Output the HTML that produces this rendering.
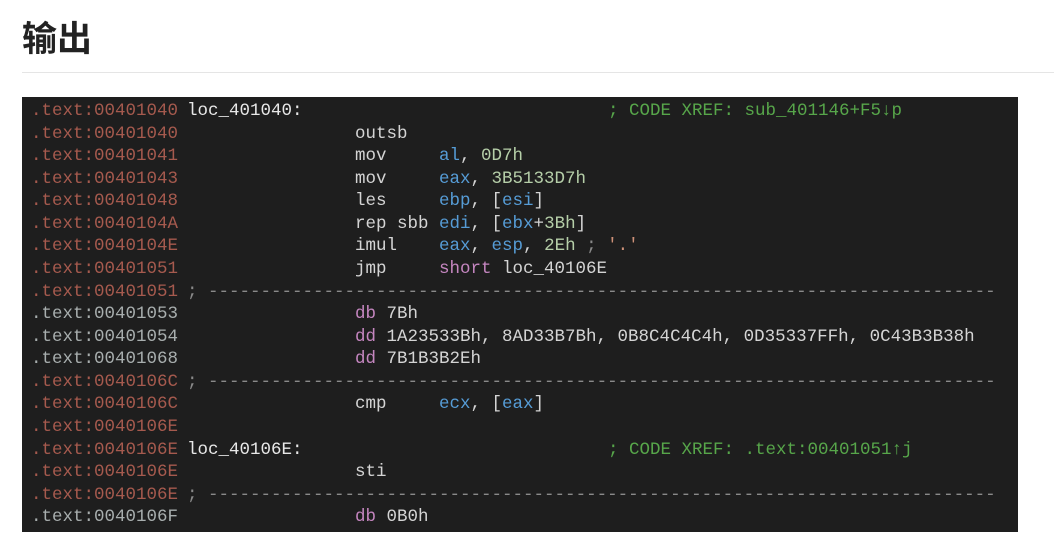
<!DOCTYPE html>
<html><head><meta charset="utf-8"><style>
body{margin:0;background:#fff;width:1054px;height:553px;overflow:hidden;position:relative;font-family:"Liberation Sans","Noto Sans CJK SC",sans-serif}
h1{position:absolute;left:22px;top:17px;margin:0;font-size:35px;font-weight:bold;color:#222;line-height:46px}
.hr{position:absolute;left:22px;top:72px;width:1032px;height:1px;background:#e5e5e5}
.code{position:absolute;left:22px;top:97px;width:996px;height:435px;background:#1e1e1e;font-family:"Liberation Mono",monospace;font-size:17.5px;color:#d4d4d4;overflow:hidden}
.l{position:absolute;left:0;height:22.56px;line-height:22.56px;white-space:pre;width:996px}
.l span{position:absolute}
.a{left:9px;color:#a65a4e}.g{color:#a8aeae}
.lb{left:165px;color:#e8e8e8}
.m{left:333px}.o{left:417px}.c{left:586px;color:#57a64a}
.d{left:165px;color:#8a8a8a}
.r{color:#569cd6}.n{color:#b5cea8}.p{color:#c586c0}.s{color:#ce9178}.x{color:#8a8a8a}
b,i{font-weight:normal;font-style:normal}
</style></head><body>
<h1>输出</h1><div class="hr"></div>
<div class="code">
<div class="l" style="top:3px"><span class="a">.text:00401040</span><span class="lb">loc_401040:</span><span class="c">; CODE XREF: sub_401146+F5↓p</span></div>
<div class="l" style="top:25.5px"><span class="a">.text:00401040</span><span class="m">outsb</span></div>
<div class="l" style="top:48.1px"><span class="a">.text:00401041</span><span class="m">mov</span><span class="o"><b class="r">al</b>, <i class="n">0D7h</i></span></div>
<div class="l" style="top:70.7px"><span class="a">.text:00401043</span><span class="m">mov</span><span class="o"><b class="r">eax</b>, <i class="n">3B5133D7h</i></span></div>
<div class="l" style="top:93.2px"><span class="a">.text:00401048</span><span class="m">les</span><span class="o"><b class="r">ebp</b>, [<b class="r">esi</b>]</span></div>
<div class="l" style="top:115.8px"><span class="a">.text:0040104A</span><span class="m">rep sbb</span><span class="o"><b class="r">edi</b>, [<b class="r">ebx</b>+<i class="n">3Bh</i>]</span></div>
<div class="l" style="top:138.4px"><span class="a">.text:0040104E</span><span class="m">imul</span><span class="o"><b class="r">eax</b>, <b class="r">esp</b>, <i class="n">2Eh</i> <i class="x">;</i> <i class="s">'.'</i></span></div>
<div class="l" style="top:160.9px"><span class="a">.text:00401051</span><span class="m">jmp</span><span class="o"><b class="p">short</b> loc_40106E</span></div>
<div class="l" style="top:183.5px"><span class="a">.text:00401051</span><span class="d">; ---------------------------------------------------------------------------</span></div>
<div class="l" style="top:206.1px"><span class="a g">.text:00401053</span><span class="m"><b class="p">db</b> 7Bh</span></div>
<div class="l" style="top:228.6px"><span class="a g">.text:00401054</span><span class="m"><b class="p">dd</b> 1A23533Bh, 8AD33B7Bh, 0B8C4C4C4h, 0D35337FFh, 0C43B3B38h</span></div>
<div class="l" style="top:251.2px"><span class="a g">.text:00401068</span><span class="m"><b class="p">dd</b> 7B1B3B2Eh</span></div>
<div class="l" style="top:273.8px"><span class="a">.text:0040106C</span><span class="d">; ---------------------------------------------------------------------------</span></div>
<div class="l" style="top:296.3px"><span class="a">.text:0040106C</span><span class="m">cmp</span><span class="o"><b class="r">ecx</b>, [<b class="r">eax</b>]</span></div>
<div class="l" style="top:318.9px"><span class="a">.text:0040106E</span></div>
<div class="l" style="top:341.5px"><span class="a">.text:0040106E</span><span class="lb">loc_40106E:</span><span class="c">; CODE XREF: .text:00401051↑j</span></div>
<div class="l" style="top:364px"><span class="a">.text:0040106E</span><span class="m">sti</span></div>
<div class="l" style="top:386.6px"><span class="a">.text:0040106E</span><span class="d">; ---------------------------------------------------------------------------</span></div>
<div class="l" style="top:409.2px"><span class="a g">.text:0040106F</span><span class="m"><b class="p">db</b> 0B0h</span></div>
</div>
</body></html>
